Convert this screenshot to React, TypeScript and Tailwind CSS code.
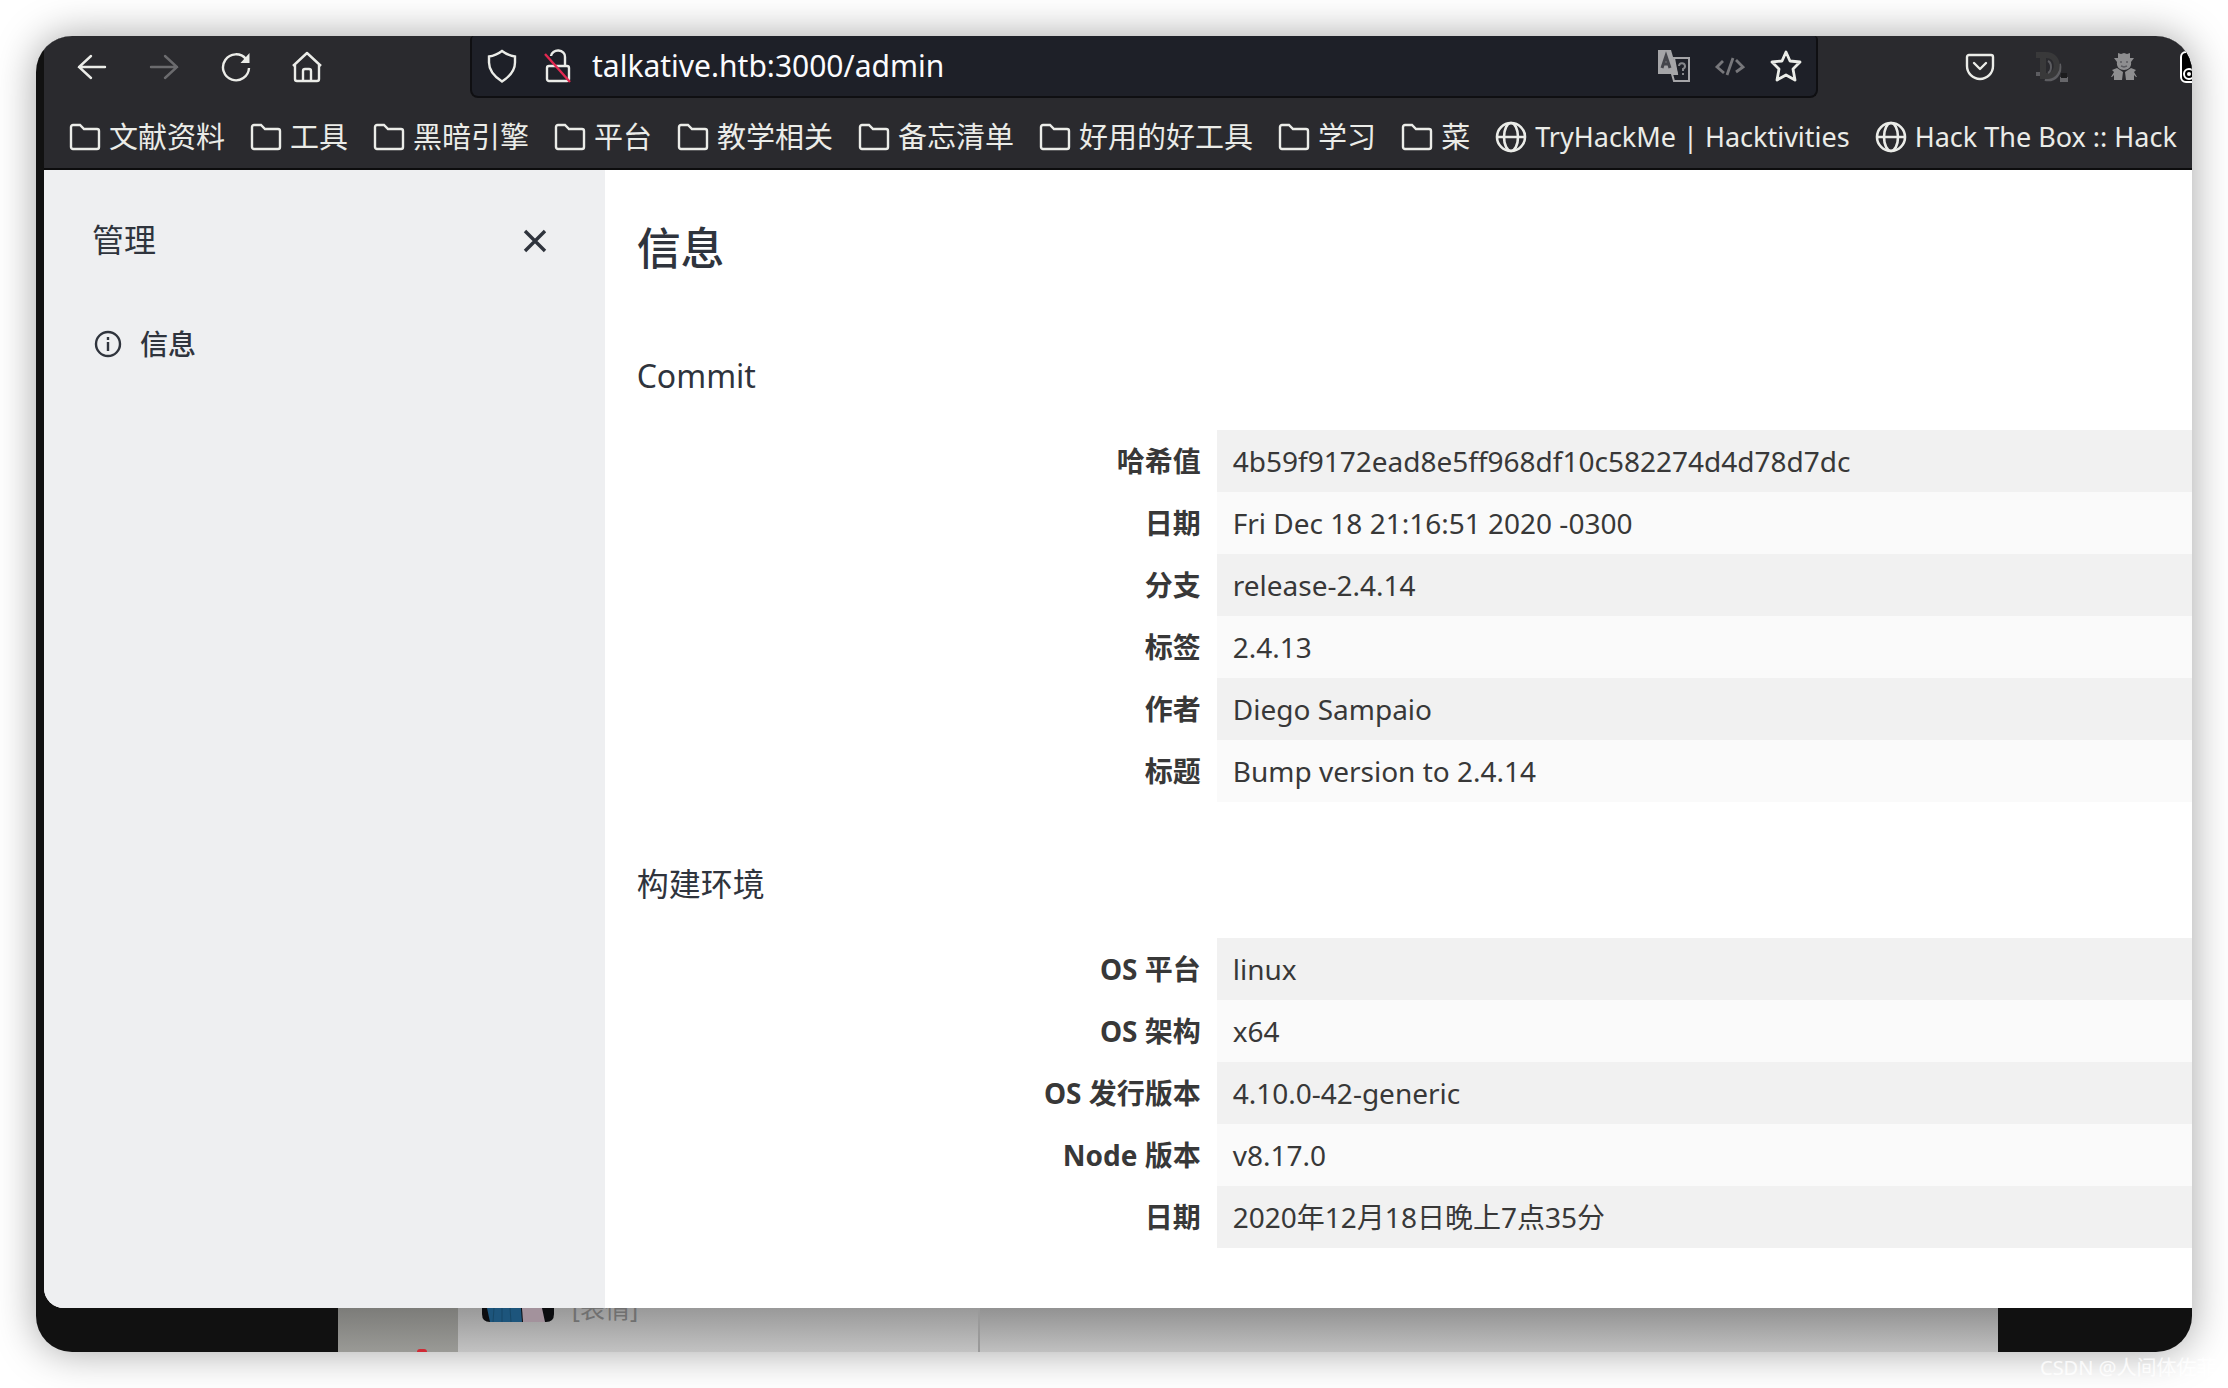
import React from 'react';

const ui = 'stroke-[#ebece8] fill-none';

const folders = ['文献资料', '工具', '黑暗引擎', '平台', '教学相关', '备忘清单', '好用的好工具', '学习', '菜'];

const sites = ['TryHackMe | Hacktivities', 'Hack The Box :: Hack'];

const commit = [
  { label: '哈希值', value: '4b59f9172ead8e5ff968df10c582274d4d78d7dc' },
  { label: '日期', value: 'Fri Dec 18 21:16:51 2020 -0300' },
  { label: '分支', value: 'release-2.4.14' },
  { label: '标签', value: '2.4.13' },
  { label: '作者', value: 'Diego Sampaio' },
  { label: '标题', value: 'Bump version to 2.4.14' }
];

const environment = [
  { label: 'OS 平台', value: 'linux' },
  { label: 'OS 架构', value: 'x64' },
  { label: 'OS 发行版本', value: '4.10.0-42-generic' },
  { label: 'Node 版本', value: 'v8.17.0' },
  { label: '日期', value: '2020年12月18日晚上7点35分' }
];

const FolderIcon: React.FC = () => (
  <svg className={`h-7 w-8 shrink-0 ${ui}`} viewBox="0 0 32 28" strokeWidth={2.4}>
    <path d="M2 4a2 2 0 0 1 2-2h7l4 4h13a2 2 0 0 1 2 2v16a2 2 0 0 1-2 2H4a2 2 0 0 1-2-2z" />
  </svg>
);

const GlobeIcon: React.FC = () => (
  <svg className={`h-8 w-8 shrink-0 ${ui}`} viewBox="0 0 32 32" strokeWidth={2.6}>
    <circle cx="16" cy="16" r="14" />
    <ellipse cx="16" cy="16" rx="7" ry="14" />
    <path d="M2 16h28" />
  </svg>
);

const InfoTable: React.FC<{ rows: { label: string; value: string }[] }> = ({ rows }) => (
  <table className="w-full table-fixed text-[28px] leading-[38px] text-[#383838]">
    <tbody>
      {rows.map((row) => (
        <tr key={row.label} className="group">
          <th scope="row" className="w-[37.3%] px-4 py-3 text-right font-bold">{row.label}</th>
          <td className="px-4 py-3 bg-[#fafafa] group-odd:bg-[#f1f1f1]">{row.value}</td>
        </tr>
      ))}
    </tbody>
  </table>
);

const App: React.FC = () => {
  return (
    <div className="relative min-h-screen bg-white p-9 font-['Noto_Sans','Noto_Sans_CJK_SC',sans-serif]">
      <div className="overflow-hidden rounded-[36px] bg-[#111111] shadow-[0_0_40px_rgba(0,0,0,0.36)]">
        {/* Browser window */}
        <div className="relative ml-2 overflow-hidden rounded-bl-[20px] bg-white">
          <header className="border-b-2 border-[#0c0c0d] bg-[#2a2a2e]">
            <div className="flex h-[62px] items-start">
              <nav className="flex w-[426px] shrink-0 gap-10 pt-[15px] pl-8">
                <button aria-label="Back">
                  <svg className={`h-8 w-8 ${ui}`} viewBox="0 0 32 32" strokeWidth={2.4} strokeLinecap="round">
                    <path d="M29 16H3M15 5 3 16l12 11" />
                  </svg>
                </button>
                <button aria-label="Forward">
                  <svg className="h-8 w-8 fill-none stroke-[#6b6b6e]" viewBox="0 0 32 32" strokeWidth={2.4} strokeLinecap="round">
                    <path d="M3 16h26M17 5l12 11-12 11" />
                  </svg>
                </button>
                <button aria-label="Reload">
                  <svg className={`h-8 w-8 ${ui}`} viewBox="0 0 32 32" strokeWidth={2.4}>
                    <path d="M26 8A13 13 0 1 0 29 17" />
                    <path d="M29.5 2v10h-9z" className="fill-[#ebece8] stroke-none" />
                  </svg>
                </button>
                <button aria-label="Home">
                  <svg className={`h-8 w-8 ${ui}`} viewBox="0 0 32 32" strokeWidth={2.4} strokeLinejoin="round">
                    <path d="M1 15 15 2l14 13M3 14v14a2 2 0 0 0 2 2h20a2 2 0 0 0 2-2V14" />
                    <path d="M11 30V20a2 2 0 0 1 2-2h4a2 2 0 0 1 2 2v10" />
                  </svg>
                </button>
              </nav>
              <div className="flex h-full min-w-0 grow items-center rounded-lg rounded-t-sm border-2 border-t-0 border-[#0f0f12] bg-[#1e2028] pr-3.5 pl-3">
                <svg className={`mr-[22px] h-9 w-9 shrink-0 ${ui}`} viewBox="0 0 36 36" strokeWidth={2.4}>
                  <path d="M18 3C14 6 9 8 5 8.5v6C5 23 11 29 18 33.5 25 29 31 23 31 14.5v-6C27 8 22 6 18 3z" />
                </svg>
                <svg className={`mr-[18px] h-9 w-8 shrink-0 ${ui}`} viewBox="0 0 32 36" strokeWidth={2.4}>
                  <rect x="5" y="18" width="22" height="15" rx="2" />
                  <path d="M9 8a7 6 0 0 1 14 1v9" />
                  <path d="M3 6l25 28" className="stroke-[#e22850]" />
                </svg>
                <input
                  aria-label="Address"
                  defaultValue="talkative.htb:3000/admin"
                  className="min-w-0 grow bg-transparent text-[30px] leading-[44px] text-[#fbfbfe] outline-none"
                />
                <div className="flex items-center gap-6">
                  <button aria-label="Translate">
                    <svg className="h-8 w-8" viewBox="0 0 32 32">
                      <path d="M0 0h13l7 24H0z" fill="#a5a5a8" />
                      <path d="M16 8h15v23H16l-2-7h5z" fill="none" stroke="#a5a5a8" strokeWidth="2" />
                      <path d="M4 18 8 6l4 12M5 14h6" fill="none" stroke="#45464c" strokeWidth="3" />
                      <path d="M21 16a3 3 0 1 1 4 3v2m0 2v2" fill="none" stroke="#85868a" strokeWidth="2" />
                    </svg>
                  </button>
                  <button aria-label="View source">
                    <svg className="h-8 w-8 fill-none stroke-[#77777b]" viewBox="0 0 32 32" strokeWidth={2.8}>
                      <path d="M9 11 3 17l7 6M19 8l-6 17M22 10l7 7-7 5" />
                    </svg>
                  </button>
                  <button aria-label="Bookmark this page">
                    <svg className={`h-8 w-8 ${ui}`} viewBox="0 0 32 32" strokeWidth={2.8} strokeLinejoin="round">
                      <path d="m16 2 4 9 10 1-7 7 2 11-9-5-9 5 2-11-7-7 10-1z" />
                    </svg>
                  </button>
                </div>
              </div>
              <div className="flex h-[62px] w-[374px] shrink-0 items-center justify-end gap-10 overflow-hidden">
                <button aria-label="Save to Pocket">
                  <svg className={`h-8 w-8 ${ui}`} viewBox="0 0 32 32" strokeWidth={2.4} strokeLinecap="round" strokeLinejoin="round">
                    <path d="M5 4h22a2 2 0 0 1 2 2v9a13 13 0 0 1-26 0V6a2 2 0 0 1 2-2z" />
                    <path d="m10 12 6 6 6-6" />
                  </svg>
                </button>
                <button aria-label="Downloader">
                  <svg className="h-8 w-8" viewBox="0 0 32 32" fill="none">
                    <path d="M0 23h6v-4M9 28c10 2 16-6 14-15" stroke="#5c5c60" strokeWidth="4" />
                    <path d="M0 4h10c14 0 14 20 2 21H7V4" stroke="#39393a" strokeWidth="6" />
                    <path d="M12 10c4 2 4 10 0 12" stroke="#5c5c60" strokeWidth="2" />
                    <path d="M24 26h8v5h-8z" fill="#66666a" />
                    <path d="M25 22h6v5h-6z" fill="#1c1c1e" />
                  </svg>
                </button>
                <button aria-label="Proxy">
                  <svg className="h-8 w-8 fill-[#8e8e90]" viewBox="0 0 32 32">
                    <path d="M10 2l3 1 3-1 3 1 3-1v5h4l-3 4c1 5-3 8-7 8s-8-3-7-8L6 7h4z" />
                    <path d="M9 17l6 4-1 8H6v-5l-2 2H3l3-5-2-2zM23 17l-6 4 1 8h8v-5l2 2h1l-3-5 2-2z" />
                    <path d="M12 11h2M18 11h2M13 15l3 1 3-1" fill="none" stroke="#5c5c60" strokeWidth="1.5" />
                  </svg>
                </button>
                <button aria-label="Extension" className="w-3 overflow-hidden">
                  <svg className="h-8 w-8" viewBox="0 0 32 32" fill="none" stroke="#ffffff" strokeWidth="2">
                    <rect x="1" y="1" width="30" height="30" rx="5" fill="#000000" />
                    <circle cx="9" cy="23" r="5" />
                    <circle cx="9" cy="23" r="1" />
                  </svg>
                </button>
              </div>
            </div>
            <nav className="flex h-[70px] items-center gap-[25px] overflow-hidden pt-2 pl-[25px] leading-[44px] text-[#ebece8]">
              {folders.map((label) => (
                <a key={label} href="#" className="flex shrink-0 items-center gap-2 text-[29px] whitespace-nowrap">
                  <FolderIcon />
                  {label}
                </a>
              ))}
              {sites.map((label) => (
                <a key={label} href="#" className="flex shrink-0 items-center gap-2 text-[27px] whitespace-nowrap">
                  <GlobeIcon />
                  {label}
                </a>
              ))}
            </nav>
          </header>

          <div className="flex min-h-[1138px]">
            {/* Sidebar */}
            <aside className="w-[26.1%] shrink-0 bg-[#eeeff1] pt-[46px] text-[#2f343d]">
              <div className="flex items-center justify-between pr-14 pl-12">
                <h2 className="text-[32px] leading-[48px]">管理</h2>
                <button aria-label="Close">
                  <svg className="h-7 w-7 fill-none stroke-[#2f343d]" viewBox="0 0 28 28" strokeWidth={3.4}>
                    <path d="m4 5 20 20M24 5 4 25" />
                  </svg>
                </button>
              </div>
              <a href="#" className="mt-8 flex h-[96px] items-center gap-[18px] pl-[50px] text-[28px] font-medium">
                <svg className="h-7 w-7 fill-none stroke-[#2f343d]" viewBox="0 0 28 28" strokeWidth={2.4}>
                  <circle cx="14" cy="14" r="12" />
                  <path d="M14 12v9M14 7v3" />
                </svg>
                信息
              </a>
            </aside>

            {/* Info page */}
            <main className="min-w-0 grow pl-8 text-[#2f343d]">
              <h1 className="pt-[46px] text-[44px] leading-[64px] font-medium">信息</h1>
              <h2 className="mt-[72px] mb-[30px] text-[32px] leading-[48px]">Commit</h2>
              <InfoTable rows={commit} />
              <h2 className="mt-[58px] mb-[30px] text-[32px] leading-[48px]">构建环境</h2>
              <InfoTable rows={environment} />
            </main>
          </div>
        </div>

        {/* Chat window behind the browser */}
        <div className="flex h-11">
          <div className="w-[14%] shrink-0" />
          <div className="flex w-[120px] shrink-0 items-end justify-center bg-linear-to-b from-[#7c7c79] to-[#9a9a96] pl-12">
            <span className="h-[3px] w-[10px] rounded-t-full bg-[#d02a35]" />
          </div>
          <div className="flex w-[522px] shrink-0 overflow-hidden border-r-2 border-[#9a9a9a] bg-linear-to-b from-[#999999] to-[#c2c2c2] pl-6">
            <svg className="h-[14px] w-[72px]" viewBox="0 0 72 14">
              <path d="M0 0h72v6q0 8-8 8H8Q0 14 0 6z" fill="#0c0d10" />
              <path d="M5 0h34l1 14H8z" fill="#1d557c" />
              <path d="M12 0l-1 14M20 0v14M28 0l1 14" stroke="#174766" fill="none" />
              <path d="M40 0h20l3 14H41z" fill="#a3929c" />
            </svg>
            <span className="-mt-[18px] ml-[18px] text-[25px] leading-9 text-[#707070]">[表情]</span>
          </div>
          <div className="grow bg-linear-to-b from-[#929292] to-[#c0c0c0]" />
          <div className="w-[9%] shrink-0" />
        </div>
      </div>
      <div className="absolute right-0 bottom-1 w-[188px] overflow-hidden text-[20px] leading-8 whitespace-nowrap text-white/80">
        CSDN @人间体佐菲
      </div>
    </div>
  );
};

export default App;
